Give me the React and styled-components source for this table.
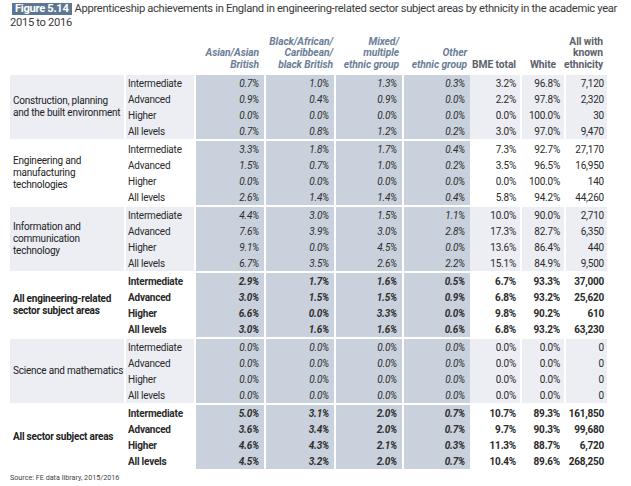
import React from 'react'
import styled, { createGlobalStyle } from 'styled-components'

const GlobalStyle = createGlobalStyle`
  body {
    margin: 0;
    background: #fff;
    font-family: Roboto, "Liberation Sans", sans-serif;
    color: #333;
  }
`;

const Page = styled.div`
  width: 631px;
  padding: 2px 0 0 10px;
  box-sizing: border-box;
`;

const Title = styled.div`
  font-size: 11.2px;
  line-height: 14px;
  letter-spacing: -0.32px;
  color: #3a3a3a;
  width: 618px;
`;

const FigureTag = styled.span`
  display: inline-block;
  background: #5c7791;
  color: #fff;
  font-weight: 700;
  line-height: 12px;
  padding: 0 3px;
  margin: 0 3px 0 2px;
`;

const Table = styled.table`
  border-collapse: separate;
  border-spacing: 0;
  table-layout: fixed;
  width: 597px;
  font-size: 10px;
  letter-spacing: -0.22px;
`;

const HeadCell = styled.th`
  height: 45px;
  box-sizing: border-box;
  vertical-align: bottom;
  text-align: right;
  white-space: nowrap;
  padding: 0 ${p => p.$pad ?? 5}px 5px 0;
  font-size: 10.3px;
  line-height: 11.5px;
  letter-spacing: -0.1px;
  font-weight: 700;
  font-style: ${p => (p.$ethnic ? 'italic' : 'normal')};
  color: ${p => (p.$ethnic ? '#6b7e98' : '#5d626b')};
`;

const Row = styled.tr`
  height: ${p => (p.$first ? 18 : 16)}px;
  & > td {
    border-top: ${p => (p.$first ? '2px solid #fff' : '0')};
  }
  &:first-child {
    height: 16px;
  }
  &:first-child > td {
    border-top: 0;
  }
`;

const GroupCell = styled.td`
  background: ${p => (p.$shade ? '#eceef4' : '#fff')};
  padding: 0 0 0 3px;
  line-height: 12px;
  font-weight: ${p => (p.$bold ? 700 : 400)};
  vertical-align: middle;
  color: #222;
`;

const GroupName = styled.div`
  max-width: ${p => p.$w || 110}px;
`;

const LevelCell = styled.td`
  background: ${p => (p.$shade ? '#eceef4' : '#fff')};
  border-left: 2px solid #fff;
  padding: 0 0 0 2px;
  font-weight: ${p => (p.$bold ? 700 : 400)};
  color: #2a2a2a;
  white-space: nowrap;
`;

const EthnicCell = styled.td`
  background: #c9d1dc;
  border-left: 2px solid #fff;
  text-align: right;
  padding-right: 5px;
  font-style: italic;
  font-weight: ${p => (p.$bold ? 700 : 400)};
  color: #2e2e2e;
`;

const TotalCell = styled.td`
  background: ${p => (p.$shade ? '#eceef4' : '#fff')};
  border-left: ${p => (p.$sep ? '2px solid #fff' : '0')};
  text-align: right;
  padding-right: ${p => p.$pad}px;
  font-weight: ${p => (p.$bold ? 700 : 400)};
  color: #2a2a2a;
`;

const Source = styled.div`
  margin-top: 4px;
  font-size: 7.2px;
  color: #444;
`;

const groups = [
  {
    name: 'Construction, planning and the built environment', shade: true,
    rows: [
      ['Intermediate', '0.7%', '1.0%', '1.3%', '0.3%', '3.2%', '96.8%', '7,120'],
      ['Advanced', '0.9%', '0.4%', '0.9%', '0.0%', '2.2%', '97.8%', '2,320'],
      ['Higher', '0.0%', '0.0%', '0.0%', '0.0%', '0.0%', '100.0%', '30'],
      ['All levels', '0.7%', '0.8%', '1.2%', '0.2%', '3.0%', '97.0%', '9,470'],
    ],
  },
  {
    name: 'Engineering and manufacturing technologies', shade: false, width: 80,
    rows: [
      ['Intermediate', '3.3%', '1.8%', '1.7%', '0.4%', '7.3%', '92.7%', '27,170'],
      ['Advanced', '1.5%', '0.7%', '1.0%', '0.2%', '3.5%', '96.5%', '16,950'],
      ['Higher', '0.0%', '0.0%', '0.0%', '0.0%', '0.0%', '100.0%', '140'],
      ['All levels', '2.6%', '1.4%', '1.4%', '0.4%', '5.8%', '94.2%', '44,260'],
    ],
  },
  {
    name: 'Information and communication technology', shade: true, width: 80,
    rows: [
      ['Intermediate', '4.4%', '3.0%', '1.5%', '1.1%', '10.0%', '90.0%', '2,710'],
      ['Advanced', '7.6%', '3.9%', '3.0%', '2.8%', '17.3%', '82.7%', '6,350'],
      ['Higher', '9.1%', '0.0%', '4.5%', '0.0%', '13.6%', '86.4%', '440'],
      ['All levels', '6.7%', '3.5%', '2.6%', '2.2%', '15.1%', '84.9%', '9,500'],
    ],
  },
  {
    name: 'All engineering-related sector subject areas', shade: false, bold: true,
    rows: [
      ['Intermediate', '2.9%', '1.7%', '1.6%', '0.5%', '6.7%', '93.3%', '37,000'],
      ['Advanced', '3.0%', '1.5%', '1.5%', '0.9%', '6.8%', '93.2%', '25,620'],
      ['Higher', '6.6%', '0.0%', '3.3%', '0.0%', '9.8%', '90.2%', '610'],
      ['All levels', '3.0%', '1.6%', '1.6%', '0.6%', '6.8%', '93.2%', '63,230'],
    ],
  },
  {
    name: 'Science and mathematics', shade: true, width: 118,
    rows: [
      ['Intermediate', '0.0%', '0.0%', '0.0%', '0.0%', '0.0%', '0.0%', '0'],
      ['Advanced', '0.0%', '0.0%', '0.0%', '0.0%', '0.0%', '0.0%', '0'],
      ['Higher', '0.0%', '0.0%', '0.0%', '0.0%', '0.0%', '0.0%', '0'],
      ['All levels', '0.0%', '0.0%', '0.0%', '0.0%', '0.0%', '0.0%', '0'],
    ],
  },
  {
    name: 'All sector subject areas', shade: false, bold: true, width: 118,
    rows: [
      ['Intermediate', '5.0%', '3.1%', '2.0%', '0.7%', '10.7%', '89.3%', '161,850'],
      ['Advanced', '3.6%', '3.4%', '2.0%', '0.7%', '9.7%', '90.3%', '99,680'],
      ['Higher', '4.6%', '4.3%', '2.1%', '0.3%', '11.3%', '88.7%', '6,720'],
      ['All levels', '4.5%', '3.2%', '2.0%', '0.7%', '10.4%', '89.6%', '268,250'],
    ],
  },
];

const widths = [114, 70, 70, 70, 68, 68, 50, 44, 43];

export default function App() {
  return (
    <Page>
      <GlobalStyle />
      <Title>
        <FigureTag>Figure 5.14</FigureTag>
        <span>Apprenticeship achievements in England in engineering-related sector subject areas by ethnicity in the academic year 2015 to 2016</span>
      </Title>
      <Table>
        <colgroup>
          {widths.map((w, i) => <col key={i} style={{ width: w }} />)}
        </colgroup>
        <thead>
          <tr>
            <HeadCell />
            <HeadCell />
            <HeadCell $ethnic>Asian/Asian<br />British</HeadCell>
            <HeadCell $ethnic $pad={1}>Black/African/<br />Caribbean/<br />black British</HeadCell>
            <HeadCell $ethnic $pad={3}>Mixed/<br />multiple<br />ethnic group</HeadCell>
            <HeadCell $ethnic $pad={3}>Other<br />ethnic group</HeadCell>
            <HeadCell $pad={4}>BME total</HeadCell>
            <HeadCell $pad={8}>White</HeadCell>
            <HeadCell $pad={4}>All with<br />known<br />ethnicity</HeadCell>
          </tr>
        </thead>
        <tbody>
          {groups.map(g =>
            g.rows.map((r, i) => (
              <Row key={g.name + r[0]} $first={i === 0}>
                {i === 0 && (
                  <GroupCell rowSpan={4} $shade={g.shade} $bold={g.bold}>
                    <GroupName $w={g.width}>{g.name}</GroupName>
                  </GroupCell>
                )}
                <LevelCell $shade={g.shade} $bold={g.bold}>{r[0]}</LevelCell>
                {r.slice(1, 5).map((v, j) => (
                  <EthnicCell key={j} $bold={g.bold}>{v}</EthnicCell>
                ))}
                <TotalCell $shade={g.shade} $bold={g.bold} $pad={4}>{r[5]}</TotalCell>
                <TotalCell $shade={g.shade} $bold={g.bold} $pad={4} $sep>{r[6]}</TotalCell>
                <TotalCell $shade={g.shade} $bold={g.bold} $pad={3} $sep>{r[7]}</TotalCell>
              </Row>
            ))
          )}
        </tbody>
      </Table>
      <Source>Source: FE data library, 2015/2016</Source>
    </Page>
  )
}
